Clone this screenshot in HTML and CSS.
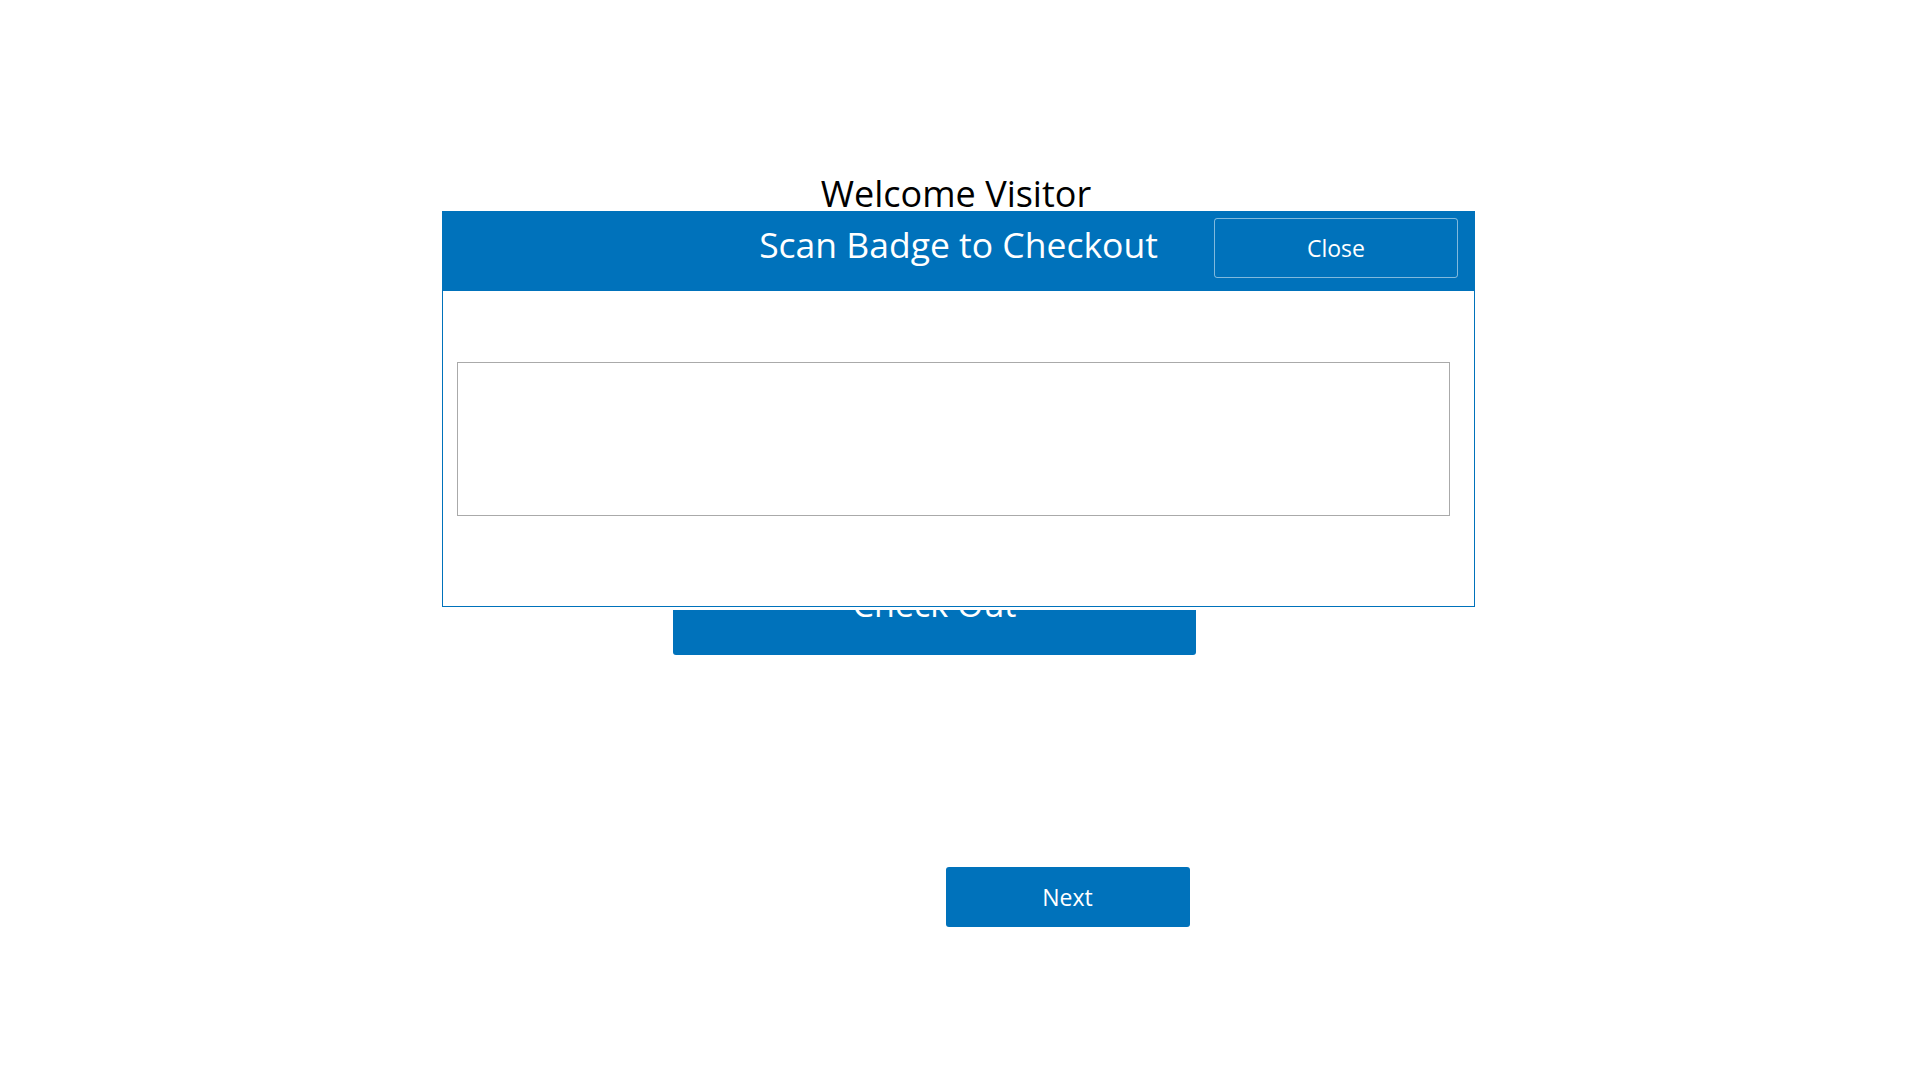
FILE: index.html
```html
<!DOCTYPE html>
<html lang="en">
<head>
  <meta charset="UTF-8" />
  <meta name="viewport" content="width=device-width, initial-scale=1.0"/>
  <title>Visitor Checkout</title>
  <link rel="stylesheet" href="styles.css">
</head>
<body>
  <div class="page">
    <h1 class="welcome">Welcome Visitor</h1>

    <div class="checkout-row">
      <button class="btn-checkout">Check Out</button>
    </div>

    <div class="nav-row">
      <button class="btn-next">Next</button>
    </div>
  </div>

  <div class="modal">
    <div class="modal-header">
      <span></span>
      <h2 class="modal-title">Scan Badge to Checkout</h2>
      <button class="btn-close">Close</button>
    </div>
    <div class="modal-body">
      <textarea class="badge-input"></textarea>
    </div>
  </div>
</body>
</html>
```

FILE: styles.css
```css
* {
  margin: 0;
  padding: 0;
  box-sizing: border-box;
  font-family: "Open Sans", sans-serif;
}

body {
  width: 100%;
  min-height: 100vh;
  background: #ffffff;
}

.page {
  display: flex;
  flex-direction: column;
  padding-top: 176px;
}

.welcome {
  text-align: center;
  font-size: 36px;
  font-weight: 400;
  line-height: 1;
  color: #000000;
  padding-right: 8px;
}

button {
  border: none;
  background-color: #0072bb;
  color: #ffffff;
  cursor: pointer;
  border-radius: 3px;
}

.checkout-row {
  display: flex;
  justify-content: center;
  padding-right: 51px;
  margin-top: 361px;
}

.btn-checkout {
  width: 523px;
  height: 82px;
  font-size: 34px;
  line-height: 1;
  padding-bottom: 20px;
}

.nav-row {
  display: flex;
  justify-content: center;
  padding-left: 215px;
  margin-top: 212px;
}

.btn-next {
  width: 244px;
  height: 60px;
  font-size: 23px;
}

.modal {
  position: absolute;
  left: 442px;
  top: 211px;
  width: 1033px;
  height: 396px;
  background: #ffffff;
  border: 1px solid #0072bb;
  box-shadow: 0 0 0 3px #ffffff;
}

.modal-header {
  display: grid;
  grid-template-columns: 1fr auto 1fr;
  align-items: center;
  height: 80px;
  margin: -1px -1px 0;
  background-color: #0072bb;
}

.modal-title {
  font-size: 35.5px;
  font-weight: 400;
  color: #ffffff;
  padding-bottom: 14px;
}

.btn-close {
  justify-self: end;
  align-self: start;
  margin-right: 17px;
  margin-top: 7px;
  width: 244px;
  height: 60px;
  font-size: 23px;
  background: transparent;
  border: 1px solid rgba(255, 255, 255, 0.5);
}

.modal-body {
  padding: 71px 24px 0 14px;
}

.badge-input {
  display: block;
  width: 100%;
  height: 154px;
  border: 1px solid #aaaaaa;
  resize: none;
  outline: none;
}
```
